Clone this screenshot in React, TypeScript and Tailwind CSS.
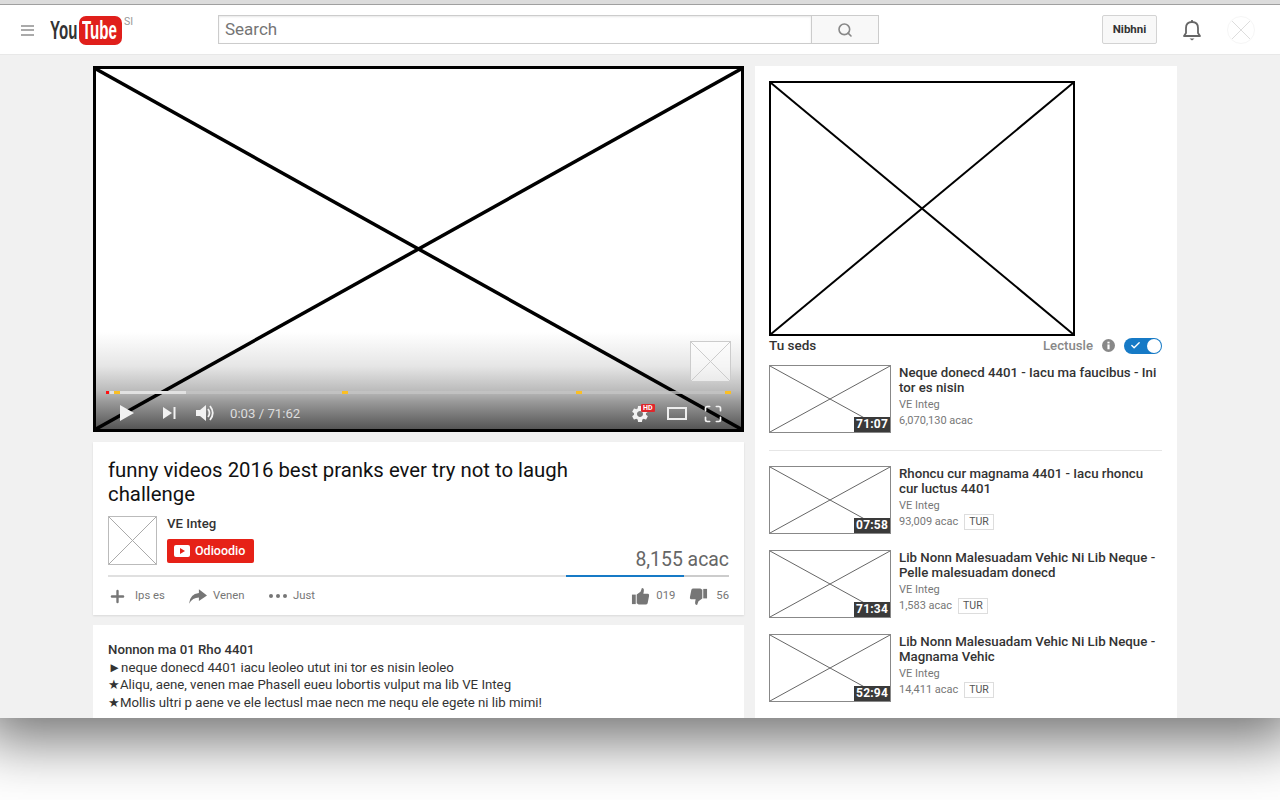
import React from 'react';
import { Search, Plus, Check, Maximize } from 'lucide-react';
import { MdSettings } from 'react-icons/md';

const Placeholder = ({ className, stroke = '#000', width = 1 }: { className: string; stroke?: string; width?: number }) => (
  <svg className={className} viewBox="0 0 100 100" preserveAspectRatio="none">
    <line x1="0" y1="0" x2="100" y2="100" stroke={stroke} strokeWidth={width} vectorEffect="non-scaling-stroke" />
    <line x1="100" y1="0" x2="0" y2="100" stroke={stroke} strokeWidth={width} vectorEffect="non-scaling-stroke" />
  </svg>
);

const ThumbUp = ({ flip }: { flip?: boolean }) => (
  <svg viewBox="0 0 20 20" className={`w-[19px] h-[19px] ${flip ? 'rotate-180' : ''}`} fill="#767676">
    <rect x="1" y="8" width="4" height="10" />
    <path d="M6 8 L10 5 L11.5 1 Q14 1 13.5 4.5 L13 7 L18 7 Q19.5 7.5 19 9.5 L17.5 17 Q17 18.5 15.5 18.5 L8 18.5 L6 17 Z" />
  </svg>
);

type Video = { title: string[]; views: string; time: string; tag?: boolean };

const videos: Video[] = [
  { title: ['Rhoncu cur magnama 4401 - Iacu rhoncu', 'cur luctus 4401'], views: '93,009 acac', time: '07:58', tag: true },
  { title: ['Lib Nonn Malesuadam Vehic Ni Lib Neque -', 'Pelle malesuadam donecd'], views: '1,583 acac', time: '71:34', tag: true },
  { title: ['Lib Nonn Malesuadam Vehic Ni Lib Neque -', 'Magnama Vehic'], views: '14,411 acac', time: '52:94', tag: true },
];

const VideoRow = ({ video }: { video: Video }) => (
  <div className="flex gap-2 h-[68px]">
    <div className="relative w-[122px] h-[68px] shrink-0 border border-[#888] bg-white">
      <Placeholder className="w-full h-full" stroke="#666" />
      <span className="absolute right-0 bottom-0 bg-[#3a3a3a] text-white text-[12px] font-bold leading-[15px] px-[2px] tracking-[0.2px]">{video.time}</span>
    </div>
    <div className="min-w-0">
      <div className="text-[13.25px] font-medium leading-[15px] text-[#333] whitespace-nowrap">
        {video.title.map(t => <div key={t}>{t}</div>)}
      </div>
      <div className="text-[11px] leading-[16px] text-[#777] mt-[2px]">VE Integ</div>
      <div className="flex items-center gap-[6px] text-[11px] leading-[16px] text-[#777]">
        {video.views}
        {video.tag && <span className="border border-[#ddd] text-[#555] text-[10.5px] leading-[12px] px-[4px] py-px">TUR</span>}
      </div>
    </div>
  </div>
);

export default function App() {
  return (
    <div className="w-[1280px] h-[800px] overflow-hidden bg-white font-['Roboto',sans-serif]">
      <div className="h-[718px] flex flex-col overflow-hidden bg-[#f1f1f1] shadow-[0_4px_56px_18px_rgba(0,0,0,0.56)]">
        <div className="h-[5px] shrink-0 bg-[#dcdcdc] border-b border-[#a0a0a0]" />
        <header className="h-[50px] shrink-0 bg-white border-b border-[#e8e8e8] flex items-center">
          <div className="ml-[21px] w-[13px] flex flex-col gap-[2.5px] mt-px">
            <span className="h-[2px] bg-[#aaa]" />
            <span className="h-[2px] bg-[#aaa]" />
            <span className="h-[2px] bg-[#aaa]" />
          </div>
          <div className="ml-[16px] flex items-start w-[168px] mt-[1px]">
            <span className="font-['Liberation_Sans',sans-serif] font-bold text-[26px] leading-[29px] text-[#333] w-[29px] origin-left scale-x-[0.58] inline-block whitespace-nowrap">You</span>
            <span className="w-[43px] h-[29px] bg-[#e01f1b] rounded-[7px] text-white font-['Liberation_Sans',sans-serif] font-bold text-[26px] leading-[29px] overflow-hidden whitespace-nowrap">
              <span className="inline-block origin-left scale-x-[0.58] ml-[3px]">Tube</span>
            </span>
            <span className="ml-[2px] text-[10.5px] leading-[12px] text-[#999]">SI</span>
          </div>
          <div className="flex h-[29px] w-[661px]">
            <div className="w-[594px] border border-[#ccc] shadow-[inset_0_1px_2px_#e8e8e8] px-[6px] text-[17px] leading-[27px] text-[#757575]">Search</div>
            <div className="flex-1 bg-[#f8f8f8] border border-l-0 border-[#ccc] flex items-center justify-center">
              <Search className="w-[16px] h-[16px] text-[#888]" strokeWidth={2.4} />
            </div>
          </div>
          <div className="ml-[223px] w-[55px] h-[29px] bg-[#f8f8f8] border border-[#d3d3d3] rounded-[2px] text-[11.5px] font-bold leading-[27px] text-center text-[#333]">Nibhni</div>
          <svg viewBox="0 0 20 22" className="ml-[25px] w-[20px] h-[22px]" fill="none" stroke="#666" strokeWidth="1.8">
            <path d="M2 17 L4 14 V9 Q4 3 10 3 Q16 3 16 9 V14 L18 17 Z" strokeLinejoin="round" />
            <path d="M10 1 V3" />
            <path d="M7.5 19.5 H12.5 L10 21.5 Z" fill="#666" stroke="none" />
          </svg>
          <div className="ml-[25px] w-[28px] h-[28px] rounded-full border border-[#f6f6f6] p-[4px]">
            <Placeholder className="w-full h-full" stroke="#ddd" />
          </div>
        </header>

        <main className="flex items-start gap-[11px] pl-[93px] pt-[11px]">
          <div className="w-[651px] shrink-0 flex flex-col gap-[10px]">
            <div className="relative h-[366px] border-[3px] border-black bg-white">
              <div className="absolute inset-x-0 bottom-0 h-[97px] bg-[linear-gradient(#fff,#e6e6e6_35%,#bcbcbc_60%,#999_72%,#555)]" />
              <Placeholder className="absolute inset-0 w-full h-full" width={3.5} />
              <div className="absolute right-[10px] bottom-[47px] w-[41px] h-[41px] border border-[#ccc] bg-white/60">
                <Placeholder className="w-full h-full" stroke="#ccc" />
              </div>
              <div className="absolute left-[10px] right-[10px] bottom-[35px] h-[3px] bg-[#c4c4c4]/80">
                <span className="absolute left-0 top-0 h-full w-[3px] bg-[#f11]" />
                <span className="absolute left-[4px] top-0 h-full w-[76px] bg-[#e2e2e2]" />
                <span className="absolute left-[8px] top-0 h-full w-[6px] bg-[#fbbf24]" />
                <span className="absolute left-[236px] top-0 h-full w-[6px] bg-[#fbbf24]" />
                <span className="absolute left-[470px] top-0 h-full w-[6px] bg-[#fbbf24]" />
                <span className="absolute right-0 top-0 h-full w-[6px] bg-[#fbbf24]" />
              </div>
              <div className="absolute inset-x-0 bottom-0 h-[34px] text-[#f2f2f2]">
                <svg viewBox="0 0 14 16" className="absolute left-[24px] top-[10px] w-[14px] h-[16px]" fill="currentColor"><path d="M0 0 L14 8 L0 16 Z" /></svg>
                <svg viewBox="0 0 13 12" className="absolute left-[67px] top-[12px] w-[13px] h-[12px]" fill="currentColor"><path d="M0 0 L9 6 L0 12 Z" /><rect x="10.5" y="0" width="2" height="12" /></svg>
                <svg viewBox="0 0 20 18" className="absolute left-[100px] top-[9px] w-[20px] h-[18px]" fill="currentColor">
                  <path d="M0 6 H4 L10 1 V17 L4 12 H0 Z" />
                  <path d="M12 5 Q15 9 12 13" fill="none" stroke="currentColor" strokeWidth="1.8" />
                  <path d="M14 2 Q19.5 9 14 16" fill="none" stroke="currentColor" strokeWidth="1.8" />
                </svg>
                <span className="absolute left-[134px] top-[11px] text-[13.2px] leading-[15px] text-[#ddd]">0:03 / 71:62</span>
                <MdSettings className="absolute left-[534px] top-[9px] w-[20px] h-[20px]" />
                <span className="absolute left-[545px] top-[9px] bg-[#e0262b] text-white text-[7px] font-bold leading-[8px] px-[2px] rounded-[1px]">HD</span>
                <span className="absolute left-[571px] top-[12px] w-[20px] h-[13px] border-2 border-[#eee]" />
                <Maximize className="absolute left-[607px] top-[9px] w-[20px] h-[20px]" strokeWidth={2} />
              </div>
            </div>

            <section className="h-[173px] bg-white px-[15px] pt-[16px] shadow-[0_1px_2px_rgba(0,0,0,0.1)]">
              <h1 className="text-[20.35px] leading-[24px] text-[#111] w-[480px]">funny videos 2016 best pranks ever try not to laugh challenge</h1>
              <div className="flex gap-[10px] mt-[10px] h-[49px]">
                <div className="w-[49px] h-[49px] border border-[#bbb]">
                  <Placeholder className="w-full h-full" stroke="#aaa" />
                </div>
                <div>
                  <div className="text-[13.2px] font-medium leading-[15px] text-[#333]">VE Integ</div>
                  <div className="mt-[8px] w-[87px] h-[24px] bg-[#e62117] rounded-[2px] flex items-center pl-[7px] gap-[5px] text-white text-[12.5px] font-medium">
                    <span className="w-[16px] h-[12px] bg-white rounded-[2px] flex items-center justify-center">
                      <span className="border-l-[5px] border-l-[#e62117] border-y-[3px] border-y-transparent" />
                    </span>
                    Odioodio
                  </div>
                </div>
                <div className="ml-auto self-end text-right text-[19.4px] leading-[22px] text-[#666] -mb-[6px]">8,155 acac</div>
              </div>
              <div className="relative h-[2px] bg-[#e0e0e0] mt-[10px]">
                <div className="absolute right-0 top-0 h-full w-[163px] bg-[#ccc]">
                  <div className="h-full w-[118px] bg-[#167ac6]" />
                </div>
              </div>
              <div className="flex items-center h-[38px] text-[11.3px] text-[#767676]">
                <Plus className="w-[19px] h-[19px] mr-[8px]" strokeWidth={3} />
                <span className="w-[34px]">Ips es</span>
                <svg viewBox="0 0 20 16" className="ml-[20px] mr-[6px] w-[18px] h-[15px]" fill="#767676"><path d="M11 0 L20 7 L11 13 L11 9 Q4 9 0 16 Q1 5 11 4 Z" /></svg>
                <span className="w-[32px]">Venen</span>
                <div className="ml-[24px] mr-[6px] flex gap-[3px]">
                  <span className="w-[4px] h-[4px] rounded-full bg-[#767676]" />
                  <span className="w-[4px] h-[4px] rounded-full bg-[#767676]" />
                  <span className="w-[4px] h-[4px] rounded-full bg-[#767676]" />
                </div>
                <span>Just</span>
                <div className="ml-auto flex items-center">
                  <ThumbUp />
                  <span className="ml-[6px] w-[20px]">019</span>
                  <span className="ml-[13px]"><ThumbUp flip /></span>
                  <span className="ml-[8px]">56</span>
                </div>
              </div>
            </section>

            <section className="h-[100px] bg-white px-[15px] pt-[16px] text-[13.23px] leading-[17.5px] text-[#333]">
              <div className="font-medium">Nonnon ma 01 Rho 4401</div>
              <div>►neque donecd 4401 iacu leoleo utut ini tor es nisin leoleo</div>
              <div>★Aliqu, aene, venen mae Phasell eueu lobortis vulput ma lib VE Integ</div>
              <div>★Mollis ultri p aene ve ele lectusl mae necn me nequ ele egete ni lib mimi!</div>
            </section>
          </div>

          <aside className="w-[422px] h-[660px] shrink-0 bg-white pl-[14px] pr-[15px] pt-[15px]">
            <div className="w-[306px] h-[255px] border-2 border-black">
              <Placeholder className="w-full h-full" width={2} />
            </div>
            <div className="flex items-center h-[19px] mb-[10px]">
              <span className="text-[13.5px] font-medium text-[#333]">Tu seds</span>
              <span className="ml-auto text-[13.2px] font-medium text-[#888]">Lectusle</span>
              <svg viewBox="0 0 12 12" className="ml-[9px] w-[13px] h-[13px]">
                <circle cx="6" cy="6" r="6" fill="#888" />
                <rect x="5" y="5" width="2" height="4.5" fill="#fff" />
                <rect x="5" y="2.5" width="2" height="1.6" fill="#fff" />
              </svg>
              <span className="ml-[9px] w-[38px] h-[16px] rounded-full bg-[#167ac6] relative flex items-center pl-[6px]">
                <Check className="w-[11px] h-[11px] text-white" strokeWidth={3} />
                <span className="absolute right-[1px] top-[1px] w-[14px] h-[14px] rounded-full bg-white" />
              </span>
            </div>
            <VideoRow video={{ title: ['Neque donecd 4401 - Iacu ma faucibus - Ini', 'tor es nisin'], views: '6,070,130 acac', time: '71:07' }} />
            <div className="h-px bg-[#e6e6e6] mt-[17px] mb-[15px]" />
            <div className="flex flex-col gap-[16px]">
              {videos.map(v => <VideoRow key={v.time} video={v} />)}
            </div>
          </aside>
        </main>
      </div>
    </div>
  );
}
